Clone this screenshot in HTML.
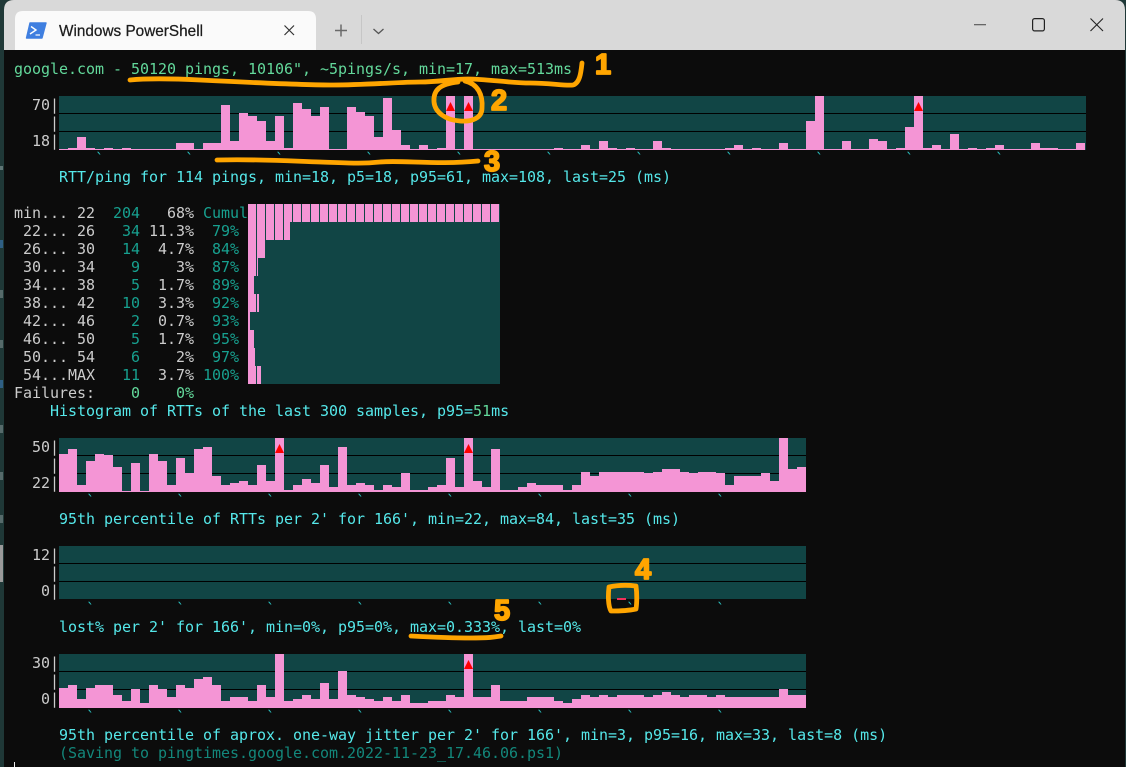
<!DOCTYPE html>
<html lang="en">
<head>
<meta charset="utf-8">
<title>Windows PowerShell</title>
<style>
html,body{margin:0;padding:0;background:#24403f;width:1126px;height:767px;overflow:hidden}
svg{display:block}
.t{font-family:"DejaVu Sans Mono","Liberation Mono",monospace;font-size:15px;letter-spacing:-.03px}
.g{fill:#cccccc}.c{fill:#55e8ea}.n{fill:#63d99b}.e{fill:#17a08f}.s{fill:#13877b}.k{fill:#2bbcbc}
.a{fill:none;stroke:#ffa500;stroke-width:4.800;stroke-linecap:round;stroke-linejoin:round}
.d{font-family:"Liberation Sans",sans-serif;font-weight:700;font-size:29px;fill:#ffa500;stroke:#ffa500;stroke-width:1.800;stroke-linejoin:round}
</style>
</head>
<body>
<svg width="1126" height="767" viewBox="0 0 1126 767" xmlns="http://www.w3.org/2000/svg">
<!-- desktop strip -->
<rect width="1126" height="767" fill="#1f3837"/>
<rect x="0" y="545" width="3" height="37" fill="#9a9a9a"/>
<rect x="0" y="166" width="3" height="4" fill="#5f7575"/>
<rect x="0" y="240" width="3" height="8" fill="#2f5f85"/>
<rect x="0" y="290" width="3" height="8" fill="#566a6a"/>
<rect x="0" y="340" width="3" height="8" fill="#566a6a"/>
<rect x="0" y="380" width="3" height="8" fill="#2f5f85"/>
<rect x="0" y="425" width="3" height="8" fill="#566a6a"/>
<rect x="0" y="472" width="3" height="8" fill="#566a6a"/>
<rect x="0" y="515" width="3" height="8" fill="#566a6a"/>
<!-- window -->
<path d="M4 767V10Q4 0 14 0H1115Q1125 0 1125 10V767Z" fill="#0c0c0c"/>
<path d="M4 50V10Q4 0 14 0H1115Q1125 0 1125 10V50Z" fill="#d9d9d9"/>
<!-- tab -->
<path d="M15 50V19Q15 11 23 11H308Q316 11 316 19V50Z" fill="#fafafa"/>
<path d="M30 23H46L42 38H26.500Z" fill="#3f7fe0" stroke="#3f7fe0" stroke-width="1.400" stroke-linejoin="round"/>
<path d="M31 26.500L36 30L30 34" fill="none" stroke="#fff" stroke-width="1.400"/>
<path d="M35.500 35H40" fill="none" stroke="#fff" stroke-width="1.200"/>
<text x="59" y="36" font-family="'Liberation Sans',sans-serif" font-size="16" fill="#1c1c1c" stroke="#1c1c1c" stroke-width=".25" textLength="144" lengthAdjust="spacingAndGlyphs">Windows PowerShell</text>
<path d="M284.500 25.500L294 35M294 25.500L284.500 35" fill="none" stroke="#333" stroke-width="1.200"/>
<path d="M335 30.500H347M341 24.500V36.500" fill="none" stroke="#6a6a6a" stroke-width="1.500"/>
<rect x="361" y="15" width="1" height="29" fill="#c6c6c6"/>
<path d="M373.500 29L378.500 33.500L383.500 29" fill="none" stroke="#555" stroke-width="1.300"/>
<!-- window controls -->
<rect x="974" y="24" width="12" height="1.300" fill="#666"/>
<rect x="1032.600" y="18.600" width="11.800" height="12.300" rx="2" fill="none" stroke="#222" stroke-width="1.200"/>
<path d="M1090.500 18.500L1103 31M1103 18.500L1090.500 31" fill="none" stroke="#222" stroke-width="1.100"/>

<!-- terminal text -->
<g class="t">
<text x="14" y="74" class="n">google.com - 50120 pings, 10106", ~5pings/s, min=17, max=513ms</text>

<text x="32" y="110" class="g">70|</text>
<text x="50" y="128" class="g">|</text>
<text x="32" y="146" class="g">18|</text>
<text x="95 185 275 365 455 545 635 725 815 905 995" y="164" class="k">&#96;&#96;&#96;&#96;&#96;&#96;&#96;&#96;&#96;&#96;&#96;</text>
<text x="59" y="182" class="c">RTT/ping for 114 pings, min=18, p5=18, p95=61, max=108, last=25 (ms)</text>

<text y="218"><tspan x="14" class="g">min... 22</tspan><tspan x="113" class="e">204</tspan><tspan x="167" class="g">68%</tspan><tspan x="203" class="e">Cumul</tspan></text>
<text y="236"><tspan x="23" class="g">22... 26</tspan><tspan x="122" class="e">34</tspan><tspan x="149" class="g">11.3%</tspan><tspan x="212" class="e">79%</tspan></text>
<text y="254"><tspan x="23" class="g">26... 30</tspan><tspan x="122" class="e">14</tspan><tspan x="158" class="g">4.7%</tspan><tspan x="212" class="e">84%</tspan></text>
<text y="272"><tspan x="23" class="g">30... 34</tspan><tspan x="131" class="e">9</tspan><tspan x="176" class="g">3%</tspan><tspan x="212" class="e">87%</tspan></text>
<text y="290"><tspan x="23" class="g">34... 38</tspan><tspan x="131" class="e">5</tspan><tspan x="158" class="g">1.7%</tspan><tspan x="212" class="e">89%</tspan></text>
<text y="308"><tspan x="23" class="g">38... 42</tspan><tspan x="122" class="e">10</tspan><tspan x="158" class="g">3.3%</tspan><tspan x="212" class="e">92%</tspan></text>
<text y="326"><tspan x="23" class="g">42... 46</tspan><tspan x="131" class="e">2</tspan><tspan x="158" class="g">0.7%</tspan><tspan x="212" class="e">93%</tspan></text>
<text y="344"><tspan x="23" class="g">46... 50</tspan><tspan x="131" class="e">5</tspan><tspan x="158" class="g">1.7%</tspan><tspan x="212" class="e">95%</tspan></text>
<text y="362"><tspan x="23" class="g">50... 54</tspan><tspan x="131" class="e">6</tspan><tspan x="176" class="g">2%</tspan><tspan x="212" class="e">97%</tspan></text>
<text y="380"><tspan x="23" class="g">54...MAX</tspan><tspan x="122" class="e">11</tspan><tspan x="158" class="g">3.7%</tspan><tspan x="203" class="e">100%</tspan></text>
<text y="398"><tspan x="14" class="g">Failures:</tspan><tspan x="131" class="n">0</tspan><tspan x="176" class="n">0%</tspan></text>
<text x="50" y="416"><tspan class="c">Histogram of RTTs of the last 300 samples, p95=</tspan><tspan class="n">51</tspan><tspan class="c">ms</tspan></text>

<text x="32" y="452" class="g">50|</text>
<text x="50" y="470" class="g">|</text>
<text x="32" y="488" class="g">22|</text>
<text x="86 176 266 356 446 536 626 716" y="506" class="k">&#96;&#96;&#96;&#96;&#96;&#96;&#96;&#96;</text>
<text x="59" y="524" class="c">95th percentile of RTTs per 2' for 166', min=22, max=84, last=35 (ms)</text>

<text x="32" y="560" class="g">12|</text>
<text x="50" y="578" class="g">|</text>
<text x="41" y="596" class="g">0|</text>
<text x="86 176 266 356 446 536 626 716" y="614" class="k">&#96;&#96;&#96;&#96;&#96;&#96;&#96;&#96;</text>
<text x="59" y="632" class="c">lost% per 2' for 166', min=0%, p95=0%, max=0.333%, last=0%</text>

<text x="32" y="668" class="g">30|</text>
<text x="50" y="686" class="g">|</text>
<text x="41" y="704" class="g">0|</text>
<text x="86 176 266 356 446 536 626 716" y="722" class="k">&#96;&#96;&#96;&#96;&#96;&#96;&#96;&#96;</text>
<text x="59" y="740" class="c">95th percentile of aprox. one-way jitter per 2' for 166', min=3, p95=16, max=33, last=8 (ms)</text>
<text x="59" y="758" class="s">(Saving to pingtimes.google.com.2022-11-23_17.46.06.ps1)</text>
</g>
<rect x="14" y="762" width="1" height="5" fill="#eeeeee"/>

<!-- chart 1 -->
<rect x="59" y="96" width="1027" height="54" fill="#114545"/>
<rect x="59" y="113" width="1027" height="1" fill="#000"/>
<rect x="59" y="131" width="1027" height="1" fill="#000"/>
<path transform="translate(59,150)" fill="#f495d5" d="M0 0V-1h9V-2h9V-13h9V-2h9V-1h9V-2h9V-1h9V-2h9V-1h45V-7h18V-1h9V-7h18V-45h9V-9h9V-37h9V-34h9V-29h9V-9h9V-34h9V-2h9V-47h9V-41h9V-34h9V-43h9V-1h18V-43h9V-38h9V-34h9V-13h9V-52h9V-20h9V-5h9V-1h9V-5h9V-1h9V-2h9V-54h9V-1h9V-54h9V-1h81V-2h9V-1h18V-5h9V-1h9V-9h9V-2h9V-1h9V-2h9V-1h18V-9h9V-2h9V-1h54V-2h9V-5h9V-1h9V-2h9V-1h18V-7h9V-1h18V-29h9V-54h9V-1h18V-9h9V-1h18V-11h9V-9h9V-1h9V-2h9V-23h9V-54h9V-2h9V-5h9V-1h9V-16h9V-1h9V-2h9V-1h9V-2h9V-5h9V-1h27V-7h9V-2h18V-1h18V-7h9V0Z"/>
<path fill="#f00" d="M446 111h9l-4.500-9zM464 111h9l-4.500-9zM914 111h9l-4.500-9z"/>

<!-- histogram -->
<rect x="248" y="204" width="252" height="180" fill="#114545"/>
<g fill="#f495d5">
<path d="M248 204h8v18h-8zM257 204h8v18h-8zM266 204h8v18h-8zM275 204h8v18h-8zM284 204h8v18h-8zM293 204h8v18h-8zM302 204h8v18h-8zM311 204h8v18h-8zM320 204h8v18h-8zM329 204h8v18h-8zM338 204h8v18h-8zM347 204h8v18h-8zM356 204h8v18h-8zM365 204h8v18h-8zM374 204h8v18h-8zM383 204h8v18h-8zM392 204h8v18h-8zM401 204h8v18h-8zM410 204h8v18h-8zM419 204h8v18h-8zM428 204h8v18h-8zM437 204h8v18h-8zM446 204h8v18h-8zM455 204h8v18h-8zM464 204h8v18h-8zM473 204h8v18h-8zM482 204h8v18h-8zM491 204h8v18h-8z"/>
<path d="M248 222h8v18h-8zM257 222h8v18h-8zM266 222h8v18h-8zM275 222h8v18h-8zM284 222h6v18h-6z"/>
<path d="M248 240h8v18h-8zM257 240h8v18h-8z"/>
<path d="M248 258h8v18h-8zM257 258h1v18h-1z"/>
<path d="M248 276h6v18h-6z"/>
<path d="M248 294h8v18h-8zM257 294h2v18h-2z"/>
<path d="M248 312h2v18h-2z"/>
<path d="M248 330h6v18h-6z"/>
<path d="M248 348h7v18h-7z"/>
<path d="M248 366h8v18h-8zM257 366h4v18h-4z"/>
</g>

<!-- chart 3 -->
<rect x="59" y="438" width="747" height="54" fill="#114545"/>
<rect x="59" y="455" width="747" height="1" fill="#000"/>
<rect x="59" y="473" width="747" height="1" fill="#000"/>
<path transform="translate(59,492)" fill="#f495d5" d="M0 0V-38h9V-43h9V-7h9V-31h9V-38h9V-37h9V-25h9V-1h9V-29h9V-1h9V-38h9V-31h9V-7h9V-34h9V-19h9V-43h9V-45h9V-16h9V-7h9V-9h9V-11h9V-7h9V-27h9V-11h9V-54h9V-2h9V-7h9V-13h9V-9h9V-27h9V-5h9V-45h9V-7h9V-9h9V-7h9V-2h9V-7h9V-5h9V-19h9V-2h18V-5h9V-7h9V-34h9V-5h9V-54h9V-11h9V-5h9V-43h9V-2h18V-5h9V-9h9V-7h27V-2h9V-7h9V-20h9V-16h9V-20h45V-19h9V-20h9V-23h18V-20h9V-19h9V-20h18V-19h9V-7h9V-16h27V-19h9V-11h9V-54h9V-23h9V-25h9V0Z"/>
<path fill="#f00" d="M275 453h9l-4.500-9zM464 453h9l-4.500-9z"/>

<!-- chart 4 -->
<rect x="59" y="546" width="747" height="53" fill="#114545"/>
<rect x="59" y="563" width="747" height="1" fill="#000"/>
<rect x="59" y="581" width="747" height="1" fill="#000"/>
<rect x="617" y="598" width="9" height="2" fill="#f0305a"/>

<!-- chart 5 -->
<rect x="59" y="654" width="747" height="54" fill="#114545"/>
<rect x="59" y="671" width="747" height="1" fill="#000"/>
<rect x="59" y="689" width="747" height="1" fill="#000"/>
<path transform="translate(59,708)" fill="#f495d5" d="M0 0V-20h9V-23h9V-9h9V-20h9V-23h18V-13h9V-7h9V-19h9V-5h9V-23h9V-19h9V-11h9V-23h9V-20h9V-29h9V-31h9V-23h9V-7h9V-11h18V-7h9V-23h9V-11h9V-54h9V-7h9V-9h9V-13h9V-9h9V-25h9V-9h9V-37h9V-13h9V-11h9V-9h9V-7h9V-11h9V-7h9V-13h9V-5h18V-7h18V-13h9V-11h9V-54h9V-11h18V-23h9V-7h27V-11h27V-7h9V-5h9V-9h9V-13h9V-11h9V-13h9V-11h9V-13h27V-11h9V-13h9V-16h9V-13h9V-11h9V-13h18V-11h9V-13h9V-11h54V-19h9V-13h18V0Z"/>
<path fill="#f00" d="M464 669h9l-4.500-9z"/>

<!-- annotations -->
<path class="a" d="M130 80C150 78 180 79 200 80S300 85 333 85S400 82 420 82S450 79 468 79S510 83 530 83S565 86 573 85C580 83 581 72 582 63"/>
<path class="a" d="M458 82C440 84 433 90 434 102C435 112 445 120 460 121C472 122 482 118 482 108C483 95 478 84 465 81"/>
<path class="a" d="M217 160C260 159 290 161 320 162S360 164 380 162S440 165 478 161"/>
<path class="a" d="M609 587C618 585 628 585 636 586C637 593 637 603 636 609C627 611 618 611 611 611C608 606 608 595 609 587Z"/>
<path class="a" d="M411 636C430 637 450 638 470 638S495 637 501 636"/>
<text class="d" x="595" y="74">1</text>
<text class="d" x="491" y="110">2</text>
<text class="d" x="484" y="171">3</text>
<text class="d" x="635" y="579">4</text>
<text class="d" x="494" y="620">5</text>
</svg>
</body>
</html>
